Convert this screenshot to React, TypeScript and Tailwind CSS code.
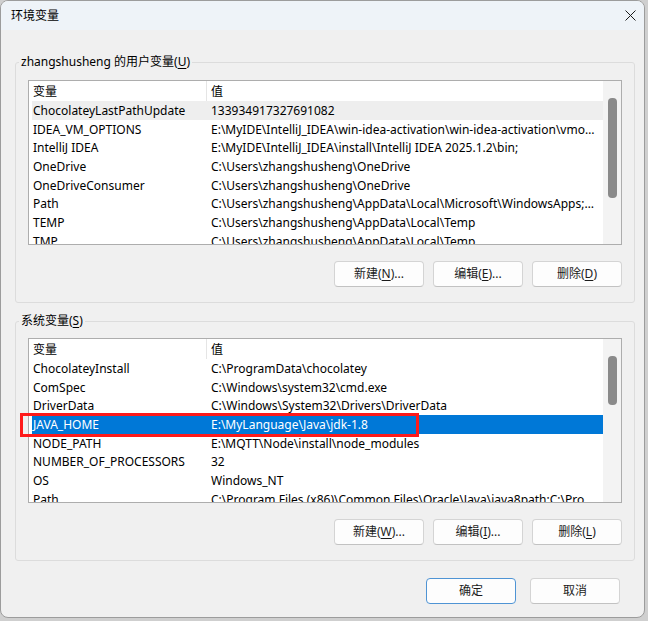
import React from "react"

type Row = { name: string; value: string; state?: "hover" | "selected" }

const userVars: Row[] = [
  { name: "ChocolateyLastPathUpdate", value: "133934917327691082", state: "hover" },
  { name: "IDEA_VM_OPTIONS", value: "E:\\MyIDE\\IntelliJ_IDEA\\win-idea-activation\\win-idea-activation\\vmoptions\\idea.vmoptions" },
  { name: "IntelliJ IDEA", value: "E:\\MyIDE\\IntelliJ_IDEA\\install\\IntelliJ IDEA 2025.1.2\\bin;" },
  { name: "OneDrive", value: "C:\\Users\\zhangshusheng\\OneDrive" },
  { name: "OneDriveConsumer", value: "C:\\Users\\zhangshusheng\\OneDrive" },
  { name: "Path", value: "C:\\Users\\zhangshusheng\\AppData\\Local\\Microsoft\\WindowsApps;C:\\Users\\zhangshusheng\\.dotnet\\tools" },
  { name: "TEMP", value: "C:\\Users\\zhangshusheng\\AppData\\Local\\Temp" },
  { name: "TMP", value: "C:\\Users\\zhangshusheng\\AppData\\Local\\Temp" },
]

const systemVars: Row[] = [
  { name: "ChocolateyInstall", value: "C:\\ProgramData\\chocolatey" },
  { name: "ComSpec", value: "C:\\Windows\\system32\\cmd.exe" },
  { name: "DriverData", value: "C:\\Windows\\System32\\Drivers\\DriverData" },
  { name: "JAVA_HOME", value: "E:\\MyLanguage\\Java\\jdk-1.8", state: "selected" },
  { name: "NODE_PATH", value: "E:\\MQTT\\Node\\install\\node_modules" },
  { name: "NUMBER_OF_PROCESSORS", value: "32" },
  { name: "OS", value: "Windows_NT" },
  { name: "Path", value: "C:\\Program Files (x86)\\Common Files\\Oracle\\Java\\java8path;C:\\Program Files\\Common Files" },
]

function VarList({ rows, thumb, children }: { rows: Row[]; thumb: string; children?: React.ReactNode }) {
  return (
    <div className="relative mx-[12px] flex h-[165px] border border-[#adadad] bg-white">
      <div className="flex min-w-0 flex-1 flex-col overflow-hidden">
        <div className="flex h-[20px] shrink-0 items-center">
          <div className="h-full w-[178px] shrink-0 border-r border-[#e5e5e5] pl-[4px] pt-[1px] leading-[20px]">变量</div>
          <div className="pl-[4px] pt-[2px]">值</div>
        </div>
        {rows.map((r) => (
          <div
            key={r.name}
            className={
              "ml-[3px] flex h-[18.7px] shrink-0 items-center pt-[1px] " +
              (r.state === "selected"
                ? "bg-[#0078d7] text-white"
                : r.state === "hover"
                  ? "bg-[#eeeeee]"
                  : "")
            }
          >
            <div className="w-[175px] shrink-0 truncate pl-[1px]">{r.name}</div>
            <div className="min-w-0 flex-1 truncate pl-[4px] pr-[2px]">{r.value}</div>
          </div>
        ))}
      </div>
      <div className="w-[18px] shrink-0 bg-[#f3f3f3] pt-[17px]">
        <div className={"mx-auto w-[9px] rounded-[4px] bg-[#8a8a8a] " + thumb} />
      </div>
      {children}
    </div>
  )
}

function Btn({ children, primary }: { children: React.ReactNode; primary?: boolean }) {
  return (
    <button
      type="button"
      className={
        "h-[26px] w-[90px] shrink-0 rounded-[4px] border bg-[#fdfdfd] text-[12px] text-[#1b1b1b] " +
        (primary ? "border-[#4f94d4]" : "border-[#d4d4d4] border-b-[#c2c2c2]")
      }
    >
      {children}
    </button>
  )
}

export default function App() {
  return (
    <div className="h-[621px] w-[648px] bg-[#cfcfcf] font-['Noto_Sans','Noto_Sans_CJK_SC',sans-serif] text-[12px] text-black">
      <div className="flex h-[618px] w-[645px] flex-col overflow-hidden rounded-[8px] border border-[#9c9c9c] bg-[#f0f0f0]">
        <div className="flex h-[29px] shrink-0 items-center bg-[#eef3f8] pl-[10px]">
          <span>环境变量</span>
          <svg className="ml-auto mr-[8px]" width="11" height="11" viewBox="0 0 11 11" fill="none" stroke="#1a1a1a" strokeWidth="1">
            <path d="M0.5 0.5 L10.5 10.5 M10.5 0.5 L0.5 10.5" />
          </svg>
        </div>

        <div className="flex min-w-0 flex-col pl-[14px] pr-[9px] pt-[24px]">
          <fieldset className="min-w-0 rounded-[3px] border border-[#dcdcdc] pb-[15px]">
            <legend className="ml-[3px] px-[2px] leading-[16px]">
              zhangshusheng 的用户变量(<u className="underline-offset-2">U</u>)
            </legend>
            <div className="mt-[10px]">
              <VarList rows={userVars} thumb="h-[100px]" />
            </div>
            <div className="mt-[16px] flex justify-end gap-[9px] px-[12px]">
              <Btn>新建(<u className="underline-offset-2">N</u>)...</Btn>
              <Btn>编辑(<u className="underline-offset-2">E</u>)...</Btn>
              <Btn>删除(<u className="underline-offset-2">D</u>)</Btn>
            </div>
          </fieldset>

          <fieldset className="mt-[10px] min-w-0 rounded-[3px] border border-[#dcdcdc] pb-[15px]">
            <legend className="ml-[3px] px-[2px] leading-[16px]">
              系统变量(<u className="underline-offset-2">S</u>)
            </legend>
            <div className="mt-[9px]">
              <VarList rows={systemVars} thumb="h-[49px]">
                <div className="pointer-events-none absolute left-[-9px] top-[74px] h-[24px] w-[399px] border-[3px] border-[#ff1a1a]" />
              </VarList>
            </div>
            <div className="mt-[16px] flex justify-end gap-[9px] px-[12px]">
              <Btn>新建(<u className="underline-offset-2">W</u>)...</Btn>
              <Btn>编辑(<u className="underline-offset-2">I</u>)...</Btn>
              <Btn>删除(<u className="underline-offset-2">L</u>)</Btn>
            </div>
          </fieldset>

          <div className="mt-[17px] flex justify-end gap-[14px] pr-[15px]">
            <Btn primary>确定</Btn>
            <Btn>取消</Btn>
          </div>
        </div>
      </div>
    </div>
  )
}
